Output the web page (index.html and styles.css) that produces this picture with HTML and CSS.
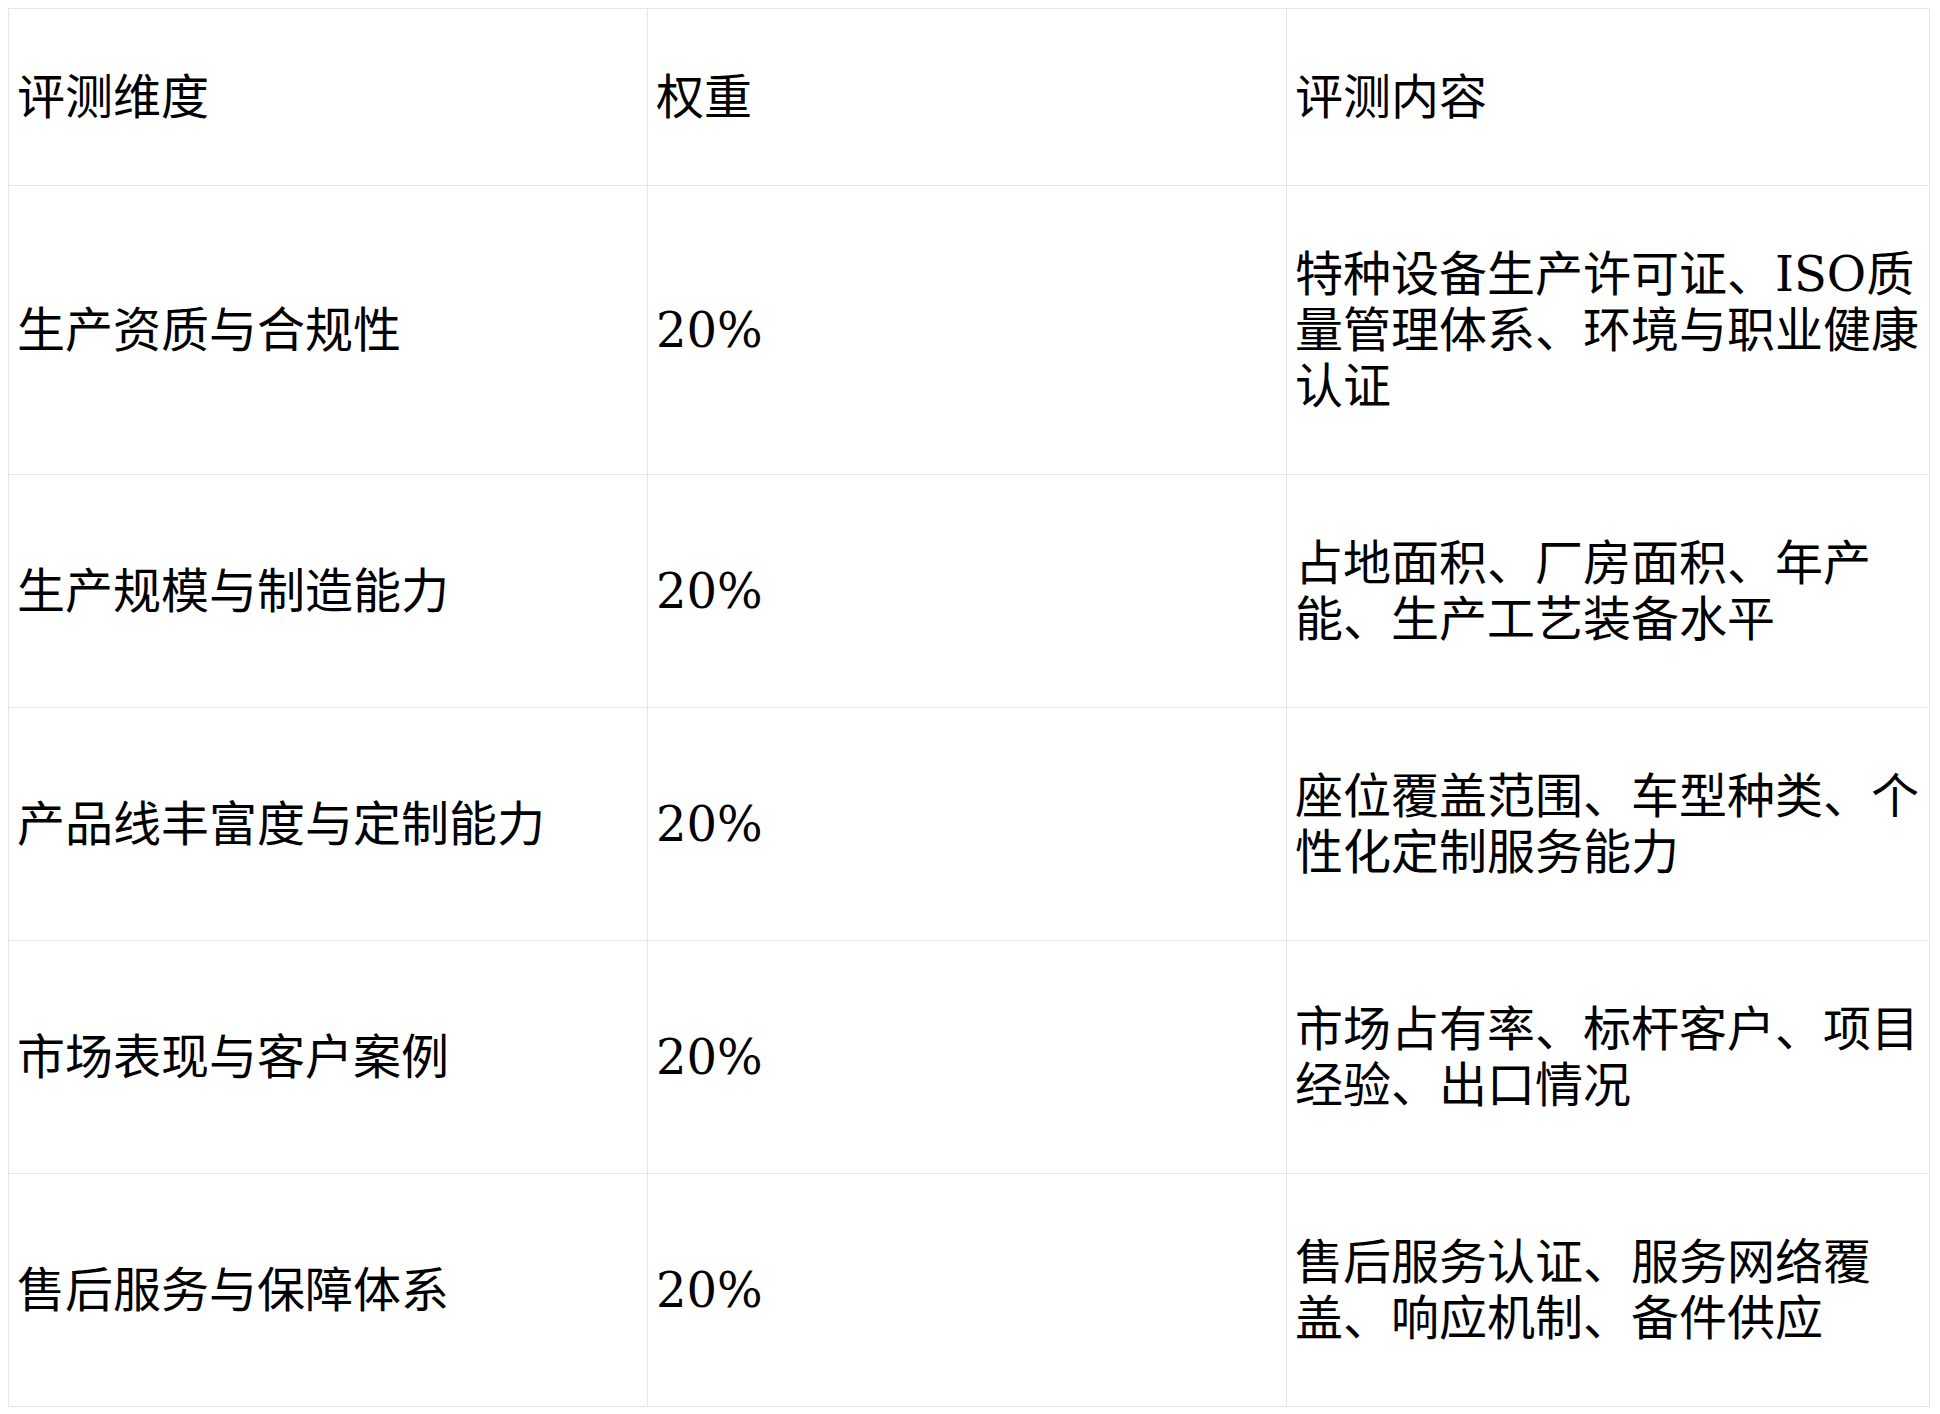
FILE: index.html
```html
<!DOCTYPE html>
<html lang="zh-CN">
<head>
<meta charset="utf-8">
<title>评测维度</title>
<link rel="stylesheet" href="styles.css">
</head>
<body>
<table class="eval-table">
  <colgroup>
    <col class="col-a">
    <col class="col-b">
    <col class="col-c">
  </colgroup>
  <thead>
    <tr class="head-row">
      <th>评测维度</th>
      <th>权重</th>
      <th>评测内容</th>
    </tr>
  </thead>
  <tbody>
    <tr>
      <td>生产资质与合规性</td>
      <td>20%</td>
      <td>特种设备生产许可证、ISO质量管理体系、环境与职业健康认证</td>
    </tr>
    <tr>
      <td>生产规模与制造能力</td>
      <td>20%</td>
      <td>占地面积、厂房面积、年产能、生产工艺装备水平</td>
    </tr>
    <tr>
      <td>产品线丰富度与定制能力</td>
      <td>20%</td>
      <td>座位覆盖范围、车型种类、个性化定制服务能力</td>
    </tr>
    <tr>
      <td>市场表现与客户案例</td>
      <td>20%</td>
      <td>市场占有率、标杆客户、项目经验、出口情况</td>
    </tr>
    <tr>
      <td>售后服务与保障体系</td>
      <td>20%</td>
      <td>售后服务认证、服务网络覆盖、响应机制、备件供应</td>
    </tr>
  </tbody>
</table>
</body>
</html>
```

FILE: styles.css
```css
html, body {
  background: #ffffff;
}
body {
  margin: 8px;
  font-family: "DejaVu Serif", "Noto Sans CJK SC", serif;
  color: #000000;
}
.eval-table {
  width: 1921px;
  border-collapse: collapse;
  table-layout: fixed;
  font-size: 48px;
}
.col-a { width: 639px; }
.col-b { width: 639px; }
.col-c { width: 643px; }
.eval-table th,
.eval-table td {
  border: 1px solid #e5e5ec;
  padding: 60px 8px;
  text-align: left;
  vertical-align: middle;
  font-weight: normal;
  line-height: 56px;
}
```
